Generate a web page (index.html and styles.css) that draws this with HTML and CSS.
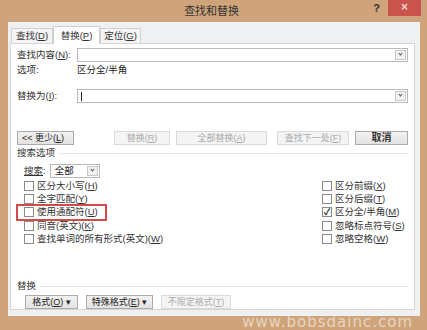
FILE: index.html
```html
<!DOCTYPE html>
<html>
<head>
	<meta charset="UTF-8">
	<title>查找和替换</title>
	<link rel="stylesheet" href="styles.css">
</head>
<body>

	<div class="window">

		<div class="titlebar">
			<span class="title">查找和替换</span>
			<span class="help">?</span>
			<span class="close">×</span>
		</div>

		<div class="client">

			<div class="tabs">
				<span class="tab">查找(<u>D</u>)</span>
				<span class="tab active">替换(<u>P</u>)</span>
				<span class="tab">定位(<u>G</u>)</span>
			</div>

			<div class="panel">

				<div class="field first">
					<span class="label">查找内容(<u>N</u>):</span>
					<span class="combo"><span class="arrow"></span></span>
				</div>

				<div class="field info">
					<span class="label">选项:</span>
					<span>区分全/半角</span>
				</div>

				<div class="field replace">
					<span class="label">替换为(<u>I</u>):</span>
					<span class="combo"><span class="caret"></span><span class="arrow"></span></span>
				</div>

				<div class="actions">
					<span class="btn less">&lt;&lt; 更少(<u>L</u>)</span>
					<span class="spacer"></span>
					<span class="btn off w-replace">替换(<u>R</u>)</span>
					<span class="btn off w-all">全部替换(<u>A</u>)</span>
					<span class="btn off w-next">查找下一处(<u>F</u>)</span>
					<span class="btn w-cancel">取消</span>
				</div>

				<div class="group-head"><span>搜索选项</span></div>

				<div class="search-row">
					<span><u>搜索</u>:</span>
					<span class="select"><span>全部</span><span class="arrow"></span></span>
				</div>

				<div class="options">
					<div class="col">
						<label class="check"><span class="box"></span><span>区分大小写(<u>H</u>)</span></label>
						<label class="check"><span class="box"></span><span>全字匹配(<u>Y</u>)</span></label>
						<label class="check marked"><span class="box"></span><span>使用通配符(<u>U</u>)</span></label>
						<label class="check"><span class="box"></span><span>同音(英文)(<u>K</u>)</span></label>
						<label class="check"><span class="box"></span><span>查找单词的所有形式(英文)(<u>W</u>)</span></label>
					</div>
					<div class="col right">
						<label class="check"><span class="box"></span><span>区分前缀(<u>X</u>)</span></label>
						<label class="check"><span class="box"></span><span>区分后缀(<u>T</u>)</span></label>
						<label class="check"><span class="box checked">✓</span><span>区分全/半角(<u>M</u>)</span></label>
						<label class="check"><span class="box"></span><span>忽略标点符号(<u>S</u>)</span></label>
						<label class="check"><span class="box"></span><span>忽略空格(<u>W</u>)</span></label>
					</div>
				</div>

				<div class="group-head bottom"><span>替换</span></div>

				<div class="format-row">
					<span class="btn w-format">格式(<u>O</u>) ▾</span>
					<span class="btn w-special">特殊格式(<u>E</u>) ▾</span>
					<span class="btn off w-nofmt">不限定格式(<u>T</u>)</span>
				</div>

			</div>
		</div>

		<div class="watermark">www.bobsdainc.com</div>
	</div>

</body>
</html>
```

FILE: styles.css
```css
html {
	box-sizing: border-box;
}

*,
*:before,
*:after {
	box-sizing: inherit;
}

body {
	margin: 0;
	width: 427px;
	height: 330px;
	overflow: hidden;
	background: #cfa47a;
	font-family: "Liberation Sans", "Noto Sans CJK SC", sans-serif;
	font-size: 9.5px;
	line-height: 14px;
	color: #222;
}

u {
	text-decoration: underline;
	text-underline-offset: 1px;
}

.window {
	position: relative;
	height: 330px;
}

/* title bar */

.titlebar {
	height: 22px;
	display: flex;
	align-items: flex-start;
}

.title {
	flex: 1;
	text-align: center;
	line-height: 22px;
	font-size: 11px;
	color: #333;
	padding-left: 50px;
}

.help {
	line-height: 17px;
	font-weight: bold;
	font-size: 11px;
	color: #333;
	margin-right: 8px;
}

.close {
	width: 33px;
	height: 16px;
	overflow: hidden;
	margin-right: 6px;
	background: #c9534d;
	color: #f5d2d0;
	text-align: center;
	line-height: 15px;
	font-size: 12px;
	font-weight: bold;
}

/* client area */

.client {
	margin: 0 7px 0 8px;
	height: 294px;
	background: #eef0f2;
	padding: 3px 5px 6px 2px;
	display: flex;
	flex-direction: column;
}

.tabs {
	display: flex;
	align-items: flex-end;
	padding-left: 1px;
	height: 18px;
}

.tab {
	flex: none;
	height: 15px;
	line-height: 14px;
	width: 42px;
	text-align: center;
	white-space: nowrap;
	border: 1px solid #d0d0d0;
	border-bottom: 0;
	background: #f4f4f4;
	color: #333;
}

.tab.active {
	height: 18px;
	line-height: 17px;
	width: 47px;
	background: #fff;
	margin-bottom: -1px;
	position: relative;
	z-index: 1;
}

.tab:last-child {
	width: 41px;
}

.panel {
	flex: 1;
	min-height: 0;
	background: #fff;
	border: 1px solid #d5d5d5;
	padding: 0 6px;
	display: flex;
	flex-direction: column;
}

/* fields */

.field {
	display: flex;
	align-items: center;
	height: 14px;
	white-space: nowrap;
}

.field.first {
	margin-top: 4px;
}

.field.info {
	margin-top: 1px;
}

.field.replace {
	margin-top: 12px;
}

.label {
	width: 60px;
	flex: none;
	color: #333;
}

.combo {
	flex: 1;
	height: 14px;
	border: 1px solid #b9b9b9;
	display: flex;
	justify-content: flex-end;
	align-items: center;
	padding-right: 1px;
	position: relative;
}

.caret {
	position: absolute;
	left: 3px;
	top: 2px;
	width: 1px;
	height: 9px;
	background: #222;
}

.arrow {
	flex: none;
	width: 11px;
	height: 10px;
	border: 1px solid #c8c8c8;
	background: #f2f2f2;
	position: relative;
}

.arrow:after {
	content: "";
	position: absolute;
	left: 3px;
	top: 1px;
	width: 3px;
	height: 3px;
	border-right: 1px solid #555;
	border-bottom: 1px solid #555;
	transform: rotate(45deg);
}

/* buttons */

.actions {
	display: flex;
	margin-top: 28px;
	height: 14px;
	gap: 6px;
}

.spacer {
	flex: 1;
}

.btn {
	flex: none;
	height: 14px;
	border: 1px solid #acacac;
	background: linear-gradient(#f2f2f2, #e3e3e3);
	text-align: center;
	line-height: 12px;
	color: #222;
	font-size: 9px;
	white-space: nowrap;
}

.btn.off {
	background: #f4f4f4;
	border-color: #dadada;
	color: #aaa;
}

.less {
	width: 57px;
	text-align: left;
	padding-left: 4px;
}

.w-replace { width: 56px; }
.w-all { width: 91px; margin-right: 4px; }
.w-next { width: 72px; }
.w-cancel { width: 53px; font-size: 10px; font-weight: bold; color: #333; }

/* groups */

.group-head {
	display: flex;
	align-items: center;
	height: 14px;
	margin-top: 1px;
	color: #333;
}

.group-head:after {
	content: "";
	flex: 1;
	height: 1px;
	margin-left: 4px;
	background: #e6e6e6;
}

.search-row {
	display: flex;
	align-items: center;
	margin-top: 4px;
	margin-left: 7px;
	height: 14px;
	color: #333;
}

.select {
	width: 50px;
	height: 14px;
	margin-left: 4px;
	border: 1px solid #b9b9b9;
	display: flex;
	align-items: center;
	justify-content: space-between;
	padding: 0 1px 0 4px;
	color: #222;
}

.options {
	display: flex;
	justify-content: space-between;
	margin-top: 1px;
	margin-left: 7px;
}

.col {
	display: grid;
	grid-auto-rows: 13.3px;
}

.col.right {
	width: 86px;
}

.check {
	display: flex;
	align-items: center;
	color: #333;
	white-space: nowrap;
}

.box {
	width: 10px;
	height: 10px;
	margin-right: 3px;
	border: 1px solid #8a8a8a;
	background: #fff;
	flex: none;
	font-size: 9px;
	line-height: 8px;
	text-align: center;
	color: #222;
	font-weight: bold;
}

.check.marked {
	outline: 2px solid #d24a4a;
	margin-left: -6px;
	padding-left: 6px;
	width: 87px;
}

.group-head.bottom {
	margin-top: 34px;
}

.format-row {
	display: flex;
	gap: 8px;
	margin-top: 2px;
	margin-left: 8px;
}

.w-format { width: 53px; }
.w-special { width: 67px; }
.w-nofmt { width: 70px; }

.watermark {
	position: absolute;
	right: 14px;
	bottom: 0;
	font-family: "DejaVu Sans", sans-serif;
	font-size: 15px;
	line-height: 16px;
	letter-spacing: 1px;
	color: rgba(255, 255, 255, .55);
}
```
